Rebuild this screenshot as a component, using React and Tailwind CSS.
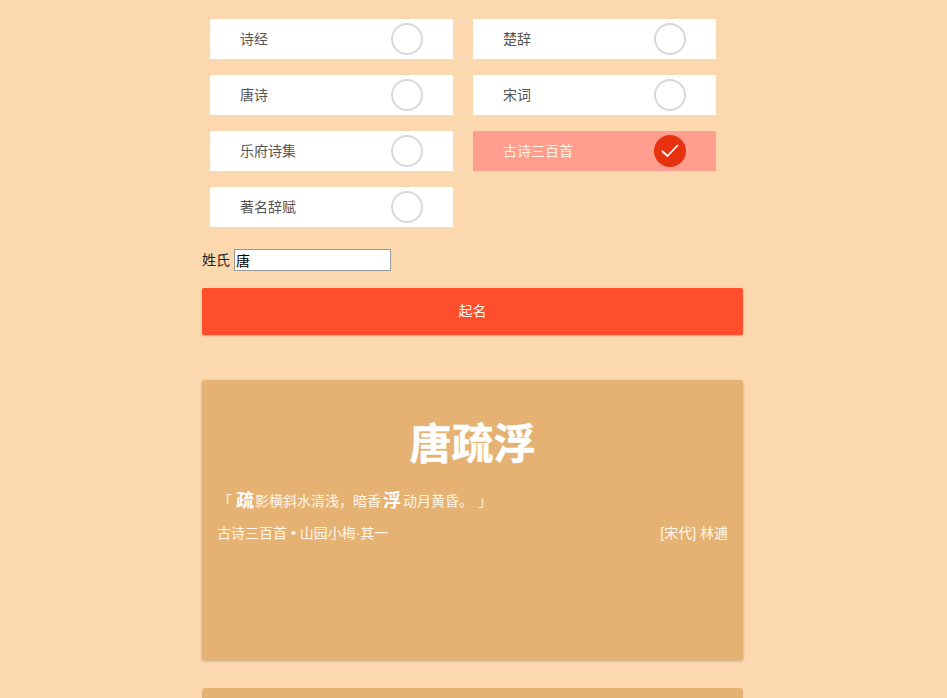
const CJK = "font-['Liberation_Sans','Noto_Sans_CJK_SC',sans-serif]";

function Option({ label, checked }) {
  return (
    <div className={`flex h-10 w-[243px] items-center justify-between px-[30px] text-sm ${checked ? "bg-[#ff9d8f] text-[#fff3e6]" : "bg-white text-[#555]"}`}>
      <span>{label}</span>
      {checked ? (
        <span className="flex h-8 w-8 items-center justify-center rounded-full bg-[#e8320f]">
          <svg width="18" height="14" viewBox="0 0 18 14" fill="none" stroke="#fff" strokeWidth="1.8" strokeLinecap="round" strokeLinejoin="round">
            <path d="M1.5 7.5 L6.5 12 L16.5 1.5" />
          </svg>
        </span>
      ) : (
        <span className="h-8 w-8 rounded-full border-2 border-[#d5d8dc] bg-white" />
      )}
    </div>
  );
}

const options = [
  ["诗经", false],
  ["楚辞", false],
  ["唐诗", false],
  ["宋词", false],
  ["乐府诗集", false],
  ["古诗三百首", true],
  ["著名辞赋", false],
];

function Card() {
  return (
    <div className="h-[280px] rounded-[3px] bg-[#e6b273] px-[15px] pt-[37px] text-white shadow-[0_1px_3px_rgba(0,0,0,0.25)]">
      <h1 className="text-center text-[42px] font-bold leading-[56px] [-webkit-text-stroke:0.5px_white]">唐疏浮</h1>
      <p className="mt-[14px] flex h-[28px] items-center whitespace-nowrap pl-px text-sm text-[#fff6e8]">
        <span>「</span>
        <b className="ml-[4px] mr-px text-lg text-white">疏</b>
        <span>影横斜水清浅，暗香</span>
        <b className="mx-[2px] text-lg text-white">浮</b>
        <span>动月黄昏。</span>
        <span className="ml-[5px]">」</span>
      </p>
      <div className="mt-[8px] flex justify-between text-sm leading-5 text-[#fff6e8]">
        <span>古诗三百首 • 山园小梅·其一</span>
        <span>[宋代] 林逋</span>
      </div>
    </div>
  );
}

export default function App() {
  return (
    <div className={`h-[698px] overflow-hidden bg-[#fbd8ae] ${CJK}`}>
      <div className="mx-auto w-[541px] -translate-x-px pt-[19px]">
        <div className="grid grid-cols-[243px_243px] gap-x-5 gap-y-4 pl-2">
          {options.map(([label, checked]) => (
            <Option key={label} label={label} checked={checked} />
          ))}
        </div>
        <label className="mt-[22px] flex h-[22px] items-center gap-[4px] text-sm text-[#222]">
          <span>姓氏</span>
          <input
            readOnly
            value="唐"
            className="h-[22px] w-[157px] border border-[#999] bg-white px-[1px] text-sm text-black outline-none"
          />
        </label>
        <button className="mt-[17px] block h-[47px] w-full rounded-[2px] bg-[#ff4e2b] pb-[2px] text-sm text-[#fff3e6] shadow-[0_1px_2px_rgba(0,0,0,0.2)]">
          起名
        </button>
        <div className="mt-[45px] flex flex-col gap-7">
          <Card />
          <div className="h-[280px] rounded-[3px] bg-[#e6b273]" />
        </div>
      </div>
    </div>
  );
}
